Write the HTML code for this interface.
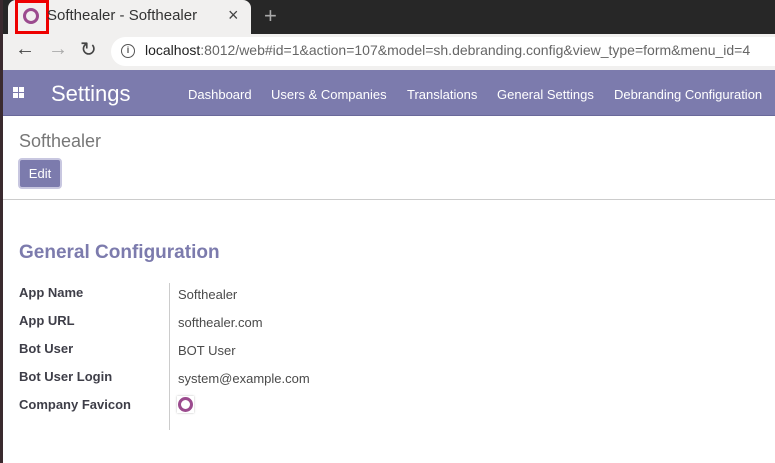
<!DOCTYPE html>
<html><head><meta charset="utf-8"><style>
*{margin:0;padding:0;box-sizing:border-box}
body{width:775px;height:463px;overflow:hidden;background:#fff;font-family:"Liberation Sans",sans-serif;position:relative}
.abs{position:absolute}
.ring{border-radius:50%;border:3px solid #9b4b8e}
.nav a{position:absolute;top:87px;color:#fff;font-size:13px;text-decoration:none}
.lbl{position:absolute;left:19px;font-weight:bold;font-size:13px;color:#3e3e48}
.val{position:absolute;left:178px;font-size:13px;color:#4a4a4a}
</style></head><body>
<div class="abs" style="left:0;top:0;width:775px;height:34px;background:#272727"></div>
<div class="abs" style="left:8px;top:0;width:243px;height:36px;background:#f1f0ef;border-radius:8px 8px 0 0"></div>
<div class="abs" style="left:15px;top:0;width:34px;height:34px;border:3px solid #ee0000"></div>
<div class="abs ring" style="left:23px;top:8px;width:16px;height:16px"></div>
<div class="abs" style="left:47px;top:7px;font-size:15px;color:#333">Softhealer - Softhealer</div>
<div class="abs" style="left:228px;top:5px;font-size:18px;color:#444">×</div>
<div class="abs" style="left:264px;top:3px;font-size:22px;color:#aaa">+</div>
<div class="abs" style="left:0;top:34px;width:775px;height:36px;background:#f1f0ef"></div>
<div class="abs" style="left:15px;top:38px;font-size:20px;color:#444">←</div>
<div class="abs" style="left:48px;top:38px;font-size:20px;color:#aaa">→</div>
<div class="abs" style="left:80px;top:37px;font-size:20px;color:#444">↻</div>
<div class="abs" style="left:111px;top:37px;width:680px;height:29px;background:#fff;border-radius:15px"></div>
<div class="abs" style="left:121px;top:44px;width:14px;height:14px;border:1.5px solid #555;border-radius:50%;font-size:9px;text-align:center;line-height:11px;color:#555;font-weight:bold">i</div>
<div class="abs" style="left:145px;top:42px;font-size:14px;color:#666;white-space:nowrap"><span style="color:#222">localhost</span>:8012/web#id=1&amp;action=107&amp;model=sh.debranding.config&amp;view_type=form&amp;menu_id=4</div>
<div class="abs" style="left:0;top:0;width:3px;height:463px;background:#3a2a2f"></div>
<div class="abs nav" style="left:3px;top:70px;width:772px;height:46px;background:#7c7bad;border-bottom:1px solid #6a699a">
</div>
<div class="abs" style="left:13px;top:87px;width:11px;height:11px;display:grid;grid-template-columns:5px 5px;gap:1px">
<div style="background:#fff"></div><div style="background:#fff"></div><div style="background:#fff"></div><div style="background:#fff"></div></div>
<div class="abs" style="left:51px;top:81px;font-size:22px;color:#fff">Settings</div>
<div class="nav">
<a style="left:188px">Dashboard</a><a style="left:271px">Users &amp; Companies</a><a style="left:407px">Translations</a><a style="left:497px">General Settings</a><a style="left:614px">Debranding Configuration</a></div>
<div class="abs" style="left:19px;top:131px;font-size:18px;color:#777">Softhealer</div>
<div class="abs" style="left:18px;top:158px;width:44px;height:31px;background:#7c7bad;border:2px solid #c8c7e0;border-radius:4px;color:#fff;font-size:13px;text-align:center;line-height:27px">Edit</div>
<div class="abs" style="left:3px;top:199px;width:772px;height:1px;background:#ccc"></div>
<div class="abs" style="left:19px;top:242px;font-size:19px;font-weight:bold;color:#7c7bad">General Configuration</div>
<div class="abs" style="left:169px;top:283px;width:1px;height:147px;background:#ccc"></div>
<div class="lbl" style="top:285px">App Name</div><div class="val" style="top:287px">Softhealer</div>
<div class="lbl" style="top:313px">App URL</div><div class="val" style="top:315px">softhealer.com</div>
<div class="lbl" style="top:341px">Bot User</div><div class="val" style="top:343px">BOT User</div>
<div class="lbl" style="top:369px">Bot User Login</div><div class="val" style="top:371px">system@example.com</div>
<div class="lbl" style="top:397px">Company Favicon</div>
<div class="abs" style="left:177px;top:396px;width:17px;height:17px;box-shadow:0 0 2px #bbb;background:#fff"></div>
<div class="abs ring" style="left:178px;top:397px;width:15px;height:15px;border-width:3.5px"></div>
</body></html>
